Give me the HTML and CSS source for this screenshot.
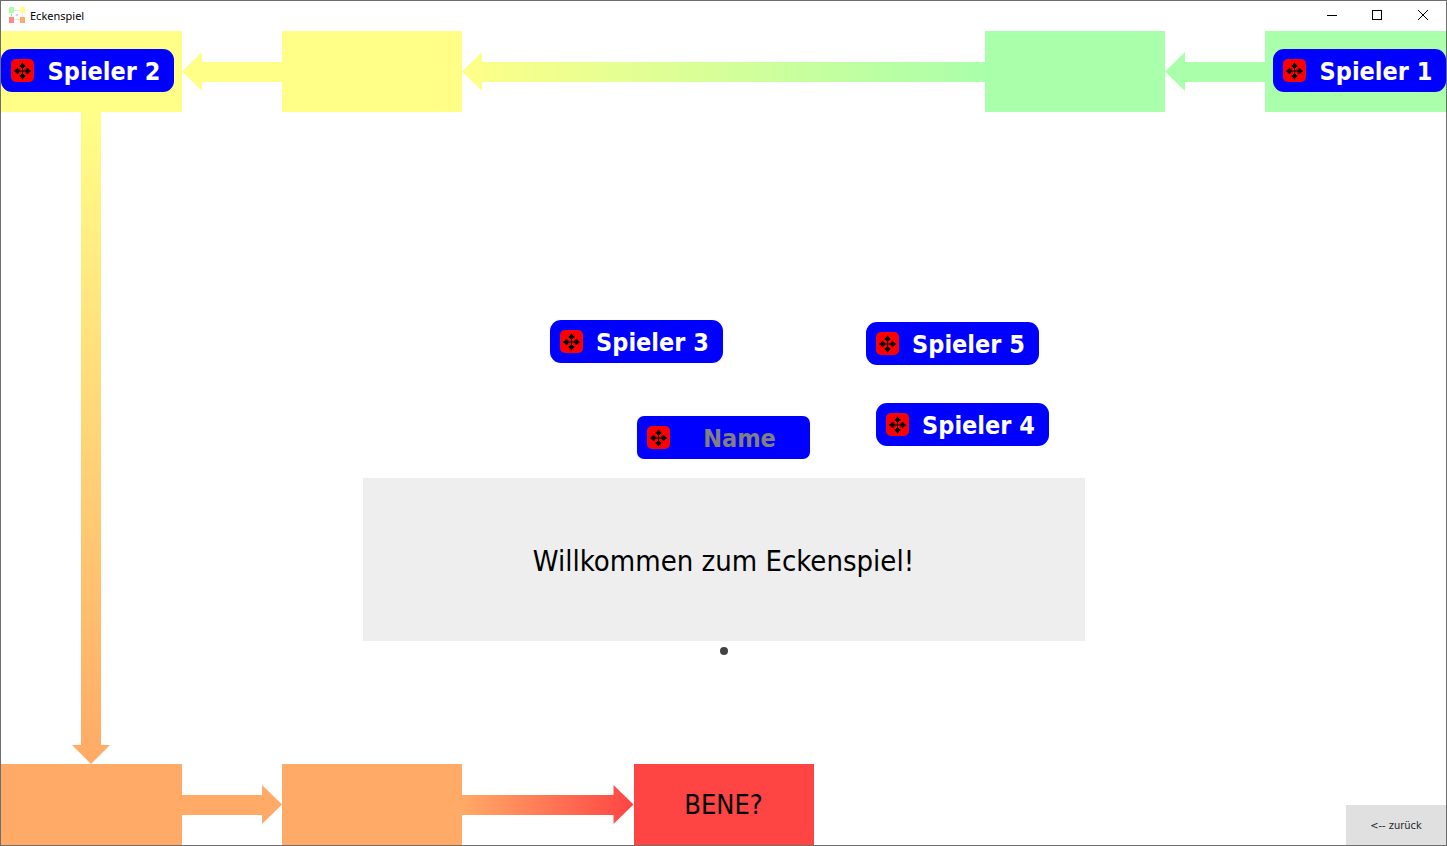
FILE: index.html
```html
<!DOCTYPE html>
<html lang="de">
<head>
<meta charset="utf-8">
<title>Eckenspiel</title>
<link rel="stylesheet" href="styles.css">
</head>
<body>
<svg class="defs" aria-hidden="true">
  <symbol id="move" viewBox="0 0 23 23">
    <path d="M11.5 7v10M6.500 12h10" stroke="#000" stroke-width="1"/>
    <path id="spade" d="M11.500 3.300l1.200 1.700 1.600 1.500v1.500h-1.300v1h-3v-1H8.700V6.500L10.300 5z"/>
    <use href="#spade" transform="rotate(90 11.500 12)"/>
    <use href="#spade" transform="rotate(180 11.500 12)"/>
    <use href="#spade" transform="rotate(270 11.500 12)"/>
  </symbol>
</svg>
<div class="window">
  <header class="titlebar">
    <svg class="app-icon" viewBox="0 0 16 16" aria-hidden="true">
      <path d="M5 3.500h6M5 12.500h6" stroke="#ffdddd"/>
      <path d="M2.500 6v4M13.500 6v4" stroke="#f4ecdc"/>
      <path fill="#aaffaa" d="M0 0h5v6H0z"/><path fill="#ffff88" d="M11 0h5v6h-5z"/>
      <path fill="#ff8888" d="M0 10h5v6H0z"/><path fill="#ffaa66" d="M11 10h5v6h-5z"/>
      <path fill="#ccccff" d="M7 7h2v2H7z"/><path fill="#88ee88" d="M2 7h1v2H2z"/>
    </svg>
    <h1 class="title">Eckenspiel</h1>
    <div class="controls">
      <button class="control" aria-label="Minimieren"><svg viewBox="0 0 10 10"><path d="M1 5.500h10"/></svg></button>
      <button class="control" aria-label="Maximieren"><svg viewBox="0 0 10 10"><path d="M.5.5h9v9h-9z"/></svg></button>
      <button class="control" aria-label="Schließen"><svg viewBox="0 0 10 10" class="smooth"><path d="M0 0l10 10M10 0L0 10"/></svg></button>
    </div>
  </header>
  <main class="board">
    <div class="row">
      <div class="field corner yellow"></div>
      <div class="arrow left short yellow"></div>
      <div class="field yellow"></div>
      <div class="arrow left long green-yellow"></div>
      <div class="field green"></div>
      <div class="arrow left short green"></div>
      <div class="field corner green"></div>
    </div>
    <div class="middle">
      <div class="down yellow-orange"></div>
      <p class="message">Willkommen zum Eckenspiel!</p>
      <div class="pager"><span class="dot"></span></div>
    </div>
    <div class="row">
      <div class="path">
        <div class="field corner orange"></div>
        <div class="arrow right short orange"></div>
        <div class="field orange"></div>
        <div class="arrow right long orange-red"></div>
        <div class="field red">BENE?</div>
      </div>
      <button class="back">&lt;-- zurück</button>
    </div>
    <div class="chip player-1"><button class="handle" aria-label="Spieler 1 verschieben"><svg><use href="#move"/></svg></button><input class="name" aria-label="Name von Spieler 1" value="Spieler 1"></div>
    <div class="chip player-2"><button class="handle" aria-label="Spieler 2 verschieben"><svg><use href="#move"/></svg></button><input class="name" aria-label="Name von Spieler 2" value="Spieler 2"></div>
    <div class="chip player-3"><button class="handle" aria-label="Spieler 3 verschieben"><svg><use href="#move"/></svg></button><input class="name" aria-label="Name von Spieler 3" value="Spieler 3"></div>
    <div class="chip player-4"><button class="handle" aria-label="Spieler 4 verschieben"><svg><use href="#move"/></svg></button><input class="name" aria-label="Name von Spieler 4" value="Spieler 4"></div>
    <div class="chip player-5"><button class="handle" aria-label="Spieler 5 verschieben"><svg><use href="#move"/></svg></button><input class="name" aria-label="Name von Spieler 5" value="Spieler 5"></div>
    <div class="chip player-new"><button class="handle" aria-label="Neuen Spieler verschieben"><svg><use href="#move"/></svg></button><input class="name" aria-label="Name" placeholder="Name"></div>
  </main>
</div>
</body>
</html>
```
FILE: styles.css
```css
* { box-sizing: border-box; }
body { margin: 0; font-family: "DejaVu Sans Condensed", "DejaVu Sans", sans-serif; color: #000; }
button, input { font: inherit; color: inherit; border: 0; padding: 0; margin: 0; background: none; }
.defs { position: absolute; width: 0; height: 0; }

.window { min-height: 100vh; display: flex; flex-direction: column; border: 1px solid #6e6e6e; background: #fff; }

.titlebar { flex: none; height: 30px; display: flex; align-items: center; padding: 0 0 2px 8px; gap: 5px; }
.app-icon { width: 16px; height: 16px; }
.title { margin: 0; padding-top: 2px; font: 11px/16px "Noto Sans", sans-serif; }
.controls { margin-left: auto; display: flex; height: 100%; }
.control { width: 46px; display: grid; place-items: center; }
.control svg { width: 10px; height: 10px; overflow: visible; fill: none; stroke: #000; shape-rendering: crispEdges; }
.control .smooth { shape-rendering: auto; }

.board { position: relative; flex: 1; display: flex; flex-direction: column; }
.row { display: flex; align-items: center; height: 81px; }
.path { display: flex; align-items: center; width: calc(50% + 90px); }
.field { flex: none; width: 180px; height: 81px; display: grid; place-items: center; font-size: 27px; }
.corner { width: 181px; }

.yellow { background: #ffff88; }
.green { background: #aaffaa; }
.orange { background: #ffaa66; }
.red { background: #ff4444; }
.green-yellow { background: linear-gradient(to left, #aaffaa, #ffff88); }
.yellow-orange { background: linear-gradient(#ffff88, #ffaa66); }
.orange-red { background: linear-gradient(to right, #ffaa66, #ff4444); }

.arrow { height: 39px; }
.short { flex: none; width: 100px; }
.long { flex: 1; }
.left { clip-path: polygon(0 50%, 20px 0, 20px 10px, 100% 10px, 100% 30px, 20px 30px, 20px 100%); }
.right { clip-path: polygon(100% 50%, calc(100% - 20px) 0, calc(100% - 20px) 10px, 0 10px, 0 30px, calc(100% - 20px) 30px, calc(100% - 20px) 100%); }
.down { grid-column: 1; grid-row: 1 / -1; width: 38px; margin-left: 71px; clip-path: polygon(50% 100%, 0 calc(100% - 19px), 9px calc(100% - 19px), 9px 0, 29px 0, 29px calc(100% - 19px), 100% calc(100% - 19px)); }

.middle { flex: 1; display: grid; grid-template-columns: 181px 1fr 4fr 1fr 181px; grid-template-rows: 366fr 163fr 123fr; }
.message { grid-column: 3; grid-row: 2; margin: 0; padding-top: 2px; display: grid; place-items: center; background: #eeeeee; font-size: 29px; }
.pager { grid-column: 3; grid-row: 3; display: flex; justify-content: center; padding-top: 6px; }
.dot { width: 8px; height: 8px; border-radius: 50%; background: #404244; }

.back { align-self: flex-end; margin-left: auto; width: 100px; height: 40px; background: #e0e0e0; color: #26282a; font-size: 11px; }

.chip { position: absolute; display: flex; align-items: center; gap: 10px; width: 173px; height: 43px; padding: 0 10px; border-radius: 11px; background: #0000ff; color: #fff; }
.handle { flex: none; width: 23px; height: 23px; border-radius: 5px; background: #ff0000; }
.handle svg { display: block; width: 23px; height: 23px; }
.name { flex: 1; min-width: 0; width: 0; padding-top: 2px; text-align: center; font-size: 25px; font-weight: bold; }
.name::placeholder { color: #808080; opacity: 1; }
.player-1 { right: 0; top: 18px; }
.player-2 { left: 0; top: 18px; }
.player-3 { left: calc(50% - 174px); top: 289px; }
.player-4 { left: calc(50% + 152px); top: 372px; }
.player-5 { left: calc(50% + 142px); top: 291px; }
.player-new { left: calc(50% - 87px); top: 385px; border-radius: 7px; }
```
